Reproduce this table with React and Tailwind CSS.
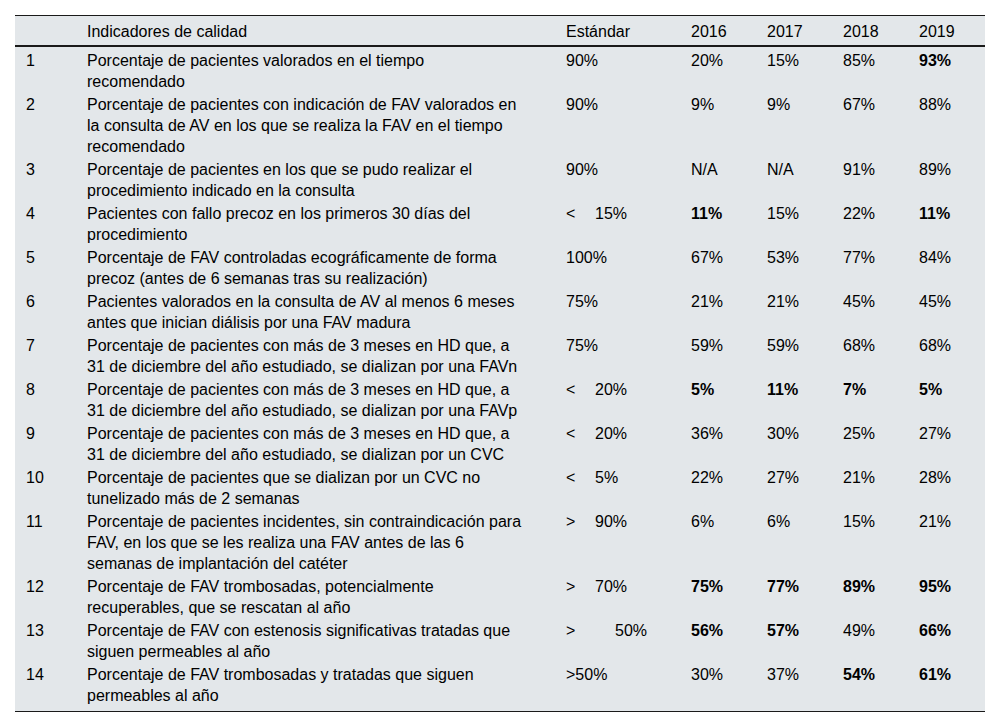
const rows = [
  { n: 1, text: ['Porcentaje de pacientes valorados en el tiempo', 'recomendado'], std: ['', '90%'], v: ['20%', '15%', '85%', '93%'], b: [0, 0, 0, 1] },
  { n: 2, text: ['Porcentaje de pacientes con indicación de FAV valorados en', 'la consulta de AV en los que se realiza la FAV en el tiempo', 'recomendado'], std: ['', '90%'], v: ['9%', '9%', '67%', '88%'], b: [0, 0, 0, 0] },
  { n: 3, text: ['Porcentaje de pacientes en los que se pudo realizar el', 'procedimiento indicado en la consulta'], std: ['', '90%'], v: ['N/A', 'N/A', '91%', '89%'], b: [0, 0, 0, 0] },
  { n: 4, text: ['Pacientes con fallo precoz en los primeros 30 días del', 'procedimiento'], std: ['<', '15%'], v: ['11%', '15%', '22%', '11%'], b: [1, 0, 0, 1] },
  { n: 5, text: ['Porcentaje de FAV controladas ecográficamente de forma', 'precoz (antes de 6 semanas tras su realización)'], std: ['', '100%'], v: ['67%', '53%', '77%', '84%'], b: [0, 0, 0, 0] },
  { n: 6, text: ['Pacientes valorados en la consulta de AV al menos 6 meses', 'antes que inician diálisis por una FAV madura'], std: ['', '75%'], v: ['21%', '21%', '45%', '45%'], b: [0, 0, 0, 0] },
  { n: 7, text: ['Porcentaje de pacientes con más de 3 meses en HD que, a', '31 de diciembre del año estudiado, se dializan por una FAVn'], std: ['', '75%'], v: ['59%', '59%', '68%', '68%'], b: [0, 0, 0, 0] },
  { n: 8, text: ['Porcentaje de pacientes con más de 3 meses en HD que, a', '31 de diciembre del año estudiado, se dializan por una FAVp'], std: ['<', '20%'], v: ['5%', '11%', '7%', '5%'], b: [1, 1, 1, 1] },
  { n: 9, text: ['Porcentaje de pacientes con más de 3 meses en HD que, a', '31 de diciembre del año estudiado, se dializan por un CVC'], std: ['<', '20%'], v: ['36%', '30%', '25%', '27%'], b: [0, 0, 0, 0] },
  { n: 10, text: ['Porcentaje de pacientes que se dializan por un CVC no', 'tunelizado más de 2 semanas'], std: ['<', '5%'], v: ['22%', '27%', '21%', '28%'], b: [0, 0, 0, 0] },
  { n: 11, text: ['Porcentaje de pacientes incidentes, sin contraindicación para', 'FAV, en los que se les realiza una FAV antes de las 6', 'semanas de implantación del catéter'], std: ['>', '90%'], v: ['6%', '6%', '15%', '21%'], b: [0, 0, 0, 0] },
  { n: 12, text: ['Porcentaje de FAV trombosadas, potencialmente', 'recuperables, que se rescatan al año'], std: ['>', '70%'], v: ['75%', '77%', '89%', '95%'], b: [1, 1, 1, 1] },
  { n: 13, text: ['Porcentaje de FAV con estenosis significativas tratadas que', 'siguen permeables al año'], std: ['>', '50%', true], v: ['56%', '57%', '49%', '66%'], b: [1, 1, 0, 1] },
  { n: 14, text: ['Porcentaje de FAV trombosadas y tratadas que siguen', 'permeables al año'], std: ['', '>50%'], v: ['30%', '37%', '54%', '61%'], b: [0, 0, 1, 1] },
]

const cols = 'grid grid-cols-[72px_479px_125px_76px_76px_76px_66px]'

function Std({ s }) {
  if (!s[0]) return <span>{s[1]}</span>
  return (
    <span className="flex">
      <span className={s[2] ? 'w-[49px]' : 'w-[29px]'}>{s[0]}</span>
      <span>{s[1]}</span>
    </span>
  )
}

export default function App() {
  return (
    <div className="bg-white min-h-[728px] pt-[15px] px-[15px] text-[16px] leading-[21px] text-black" style={{ fontFamily: '"Liberation Sans", Arial, sans-serif' }}>
      <div className="bg-[#e3e7ea] border-t border-b border-[#1a1a1a] w-[970px]">
        {/* header */}
        <div className={`${cols} pt-[5px] pb-[3px] border-b-2 border-[#1a1a1a]`}>
          <div className="pl-[11px]"></div>
          <div>Indicadores de calidad</div>
          <div>Estándar</div>
          <div>2016</div>
          <div>2017</div>
          <div>2018</div>
          <div>2019</div>
        </div>

        <div className="pt-[1px] pb-[5px]">
          {rows.map(r => (
            <div key={r.n} className={`${cols} pt-[2px]`}>
              <div className="pl-[11px]">{r.n}</div>
              <div className="whitespace-nowrap">
                {r.text.map((t, i) => <div key={i}>{t}</div>)}
              </div>
              <div><Std s={r.std} /></div>
              {r.v.map((v, i) => (
                <div key={i} className={r.b[i] ? 'font-bold' : ''}>{v}</div>
              ))}
            </div>
          ))}
        </div>
      </div>
    </div>
  )
}
